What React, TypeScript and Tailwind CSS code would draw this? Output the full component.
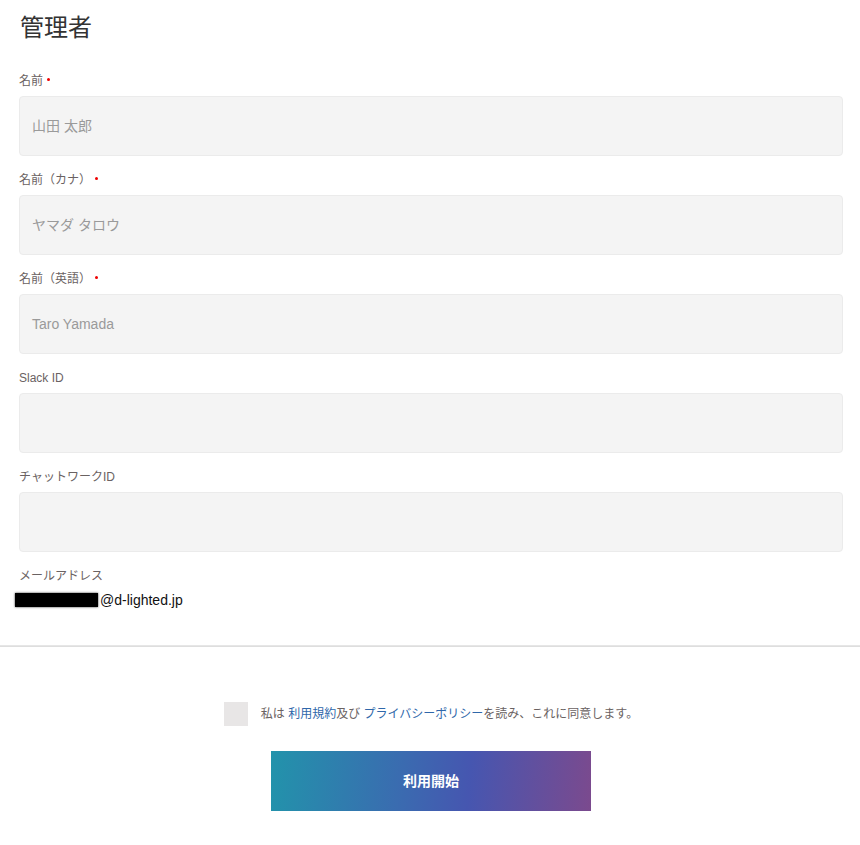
import React from "react";

const font = {
  fontFamily:
    '"Liberation Sans", "Noto Sans CJK JP", "Noto Sans", sans-serif',
};

function Req() {
  return (
    <span className="inline-block w-[3px] h-[3px] rounded-full bg-[#e00] align-top mt-[6px] ml-[4px]" />
  );
}

function Field({
  label,
  required,
  placeholder,
}: {
  label: string;
  required?: boolean;
  placeholder?: string;
}) {
  return (
    <div className="mb-[15px]">
      <div className="text-[12px] leading-[18px] text-[#6a6262] mb-[6px] flex items-start">
        <span>{label}</span>
        {required && <Req />}
      </div>
      <div className="h-[60px] bg-[#f4f4f4] border border-[#ebebeb] rounded-[4px] flex items-center px-[12px] text-[14px] text-[#9a9a9a]">
        {placeholder}
      </div>
    </div>
  );
}

export default function App() {
  return (
    <div className="w-[860px] h-[845px] bg-white overflow-hidden" style={font}>
      <div className="pl-[19px] pr-[17px]">
        <h1 className="text-[24px] leading-[36px] text-[#333] pl-[1px] pt-[10px] mb-[26px]">
          管理者
        </h1>
        <Field label="名前" required placeholder="山田 太郎" />
        <Field label="名前（カナ）" required placeholder="ヤマダ タロウ" />
        <Field label="名前（英語）" required placeholder="Taro Yamada" />
        <Field label="Slack ID" />
        <Field label="チャットワークID" />
        <div>
          <div className="text-[12px] leading-[18px] text-[#6a6262] mb-[5px]">
            メールアドレス
          </div>
          <div className="text-[14px] leading-[20px] text-[#111] flex items-center -ml-[4px]">
            <span className="inline-block w-[83px] h-[14px] bg-black shadow-[0_0_2px_rgba(0,0,0,0.8)] mr-[2px]" />
            <span>@d-lighted.jp</span>
          </div>
        </div>
      </div>
      <div className="mt-[35px] h-[2px] bg-[#e6e6e6] border-b border-[#dedede]" />
      <div className="flex items-center justify-center mt-[55px] pl-[2px]">
        <div className="w-[24px] h-[24px] bg-[#e8e6e6]" />
        <div className="ml-[13px] text-[12px] leading-[18px] text-[#6a6262]">
          私は <span className="text-[#2f67aa]">利用規約</span>及び{" "}
          <span className="text-[#2f67aa]">プライバシーポリシー</span>を読み、これに同意します。
        </div>
      </div>
      <div className="flex justify-center mt-[25px] pl-[2px]">
        <button className="w-[320px] h-[60px] text-white font-bold text-[14px] bg-[linear-gradient(95deg,#2293ab_0%,#3a6cb0_40%,#4656b0_62%,#7b4a8e_100%)]">
          利用開始
        </button>
      </div>
    </div>
  );
}
